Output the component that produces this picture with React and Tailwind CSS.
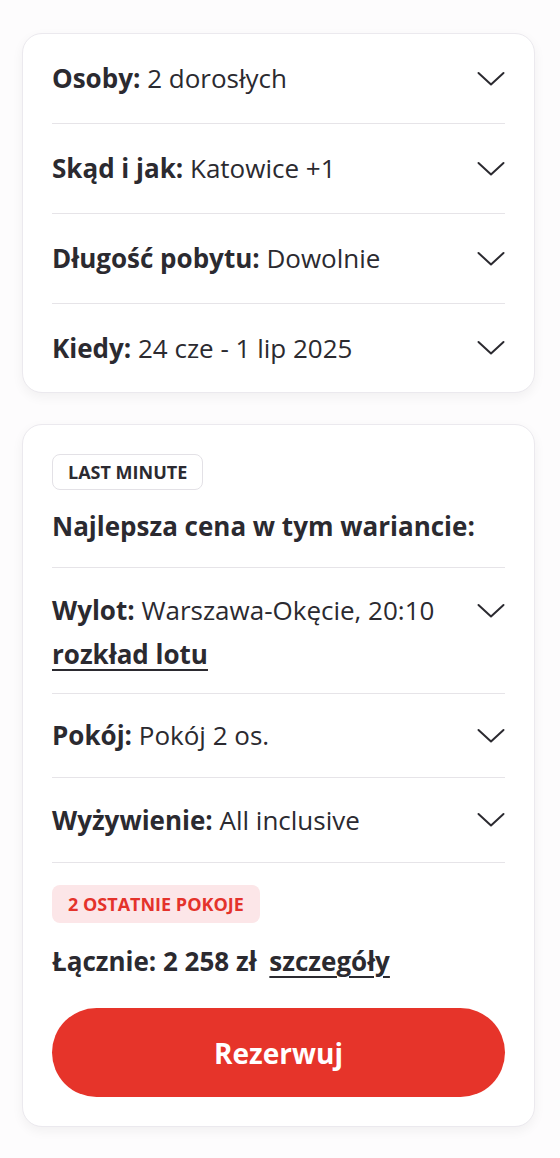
function Chevron({ className = '' }) {
  return (
    <svg width="28" height="16" viewBox="0 0 28 16" fill="none" className={`shrink-0 ${className}`}>
      <path d="M1.5 2 L14 13.5 L26.5 2" stroke="#2b2a30" strokeWidth="2" strokeLinecap="round" strokeLinejoin="round" />
    </svg>
  )
}

function Row({ label, value, last }) {
  return (
    <div className={`flex items-center justify-between ${last ? 'h-[88px]' : 'h-[90px] border-b border-[#e6e4e8]'}`}>
      <p className="text-[26px] text-[#2b2a30]">
        <span className="font-bold">{label}</span> {value}
      </p>
      <Chevron />
    </div>
  )
}

export default function App() {
  return (
    <div
      className="min-h-[1158px] bg-[#fdfcfd] pl-[22px] pr-[25px] pt-[33px] pb-[30px] flex flex-col gap-[31px]"
      style={{ fontFamily: '"Open Sans", Lato, sans-serif' }}
    >
      <div className="bg-white rounded-[20px] border border-[#ebe9ee] shadow-[0_4px_12px_rgba(0,0,0,0.05)] px-[29px]">
        <Row label="Osoby:" value="2 dorosłych" />
        <Row label="Skąd i jak:" value="Katowice +1" />
        <Row label="Długość pobytu:" value="Dowolnie" />
        <Row label="Kiedy:" value="24 cze - 1 lip 2025" last />
      </div>

      <div className="bg-white rounded-[20px] border border-[#ebe9ee] shadow-[0_4px_12px_rgba(0,0,0,0.05)] px-[29px] pt-[29px] pb-[29px]">
        <div className="w-fit h-[36px] flex items-center border border-[#e3e1e6] rounded-[8px] px-[15px] text-[18px] font-bold text-[#2b2a30]">
          LAST MINUTE
        </div>
        <p className="mt-[20px] pb-[25px] text-[26px] font-bold text-[#2b2a30] leading-[32px] border-b border-[#e6e4e8]">
          Najlepsza cena w tym wariancie:
        </p>

        <div className="flex items-start justify-between border-b border-[#e6e4e8] pt-[26px] pb-[21px]">
          <div>
            <p className="text-[26px] text-[#2b2a30] leading-[32px]">
              <span className="font-bold">Wylot:</span> Warszawa-Okęcie, 20:10
            </p>
            <a className="block mt-[10px] w-fit text-[26px] font-bold text-[#2b2a30] underline underline-offset-[5px] decoration-2 leading-[36px]">rozkład lotu</a>
          </div>
          <Chevron className="mt-[9px]" />
        </div>

        <div className="h-[84px] flex items-center justify-between border-b border-[#e6e4e8]">
          <p className="text-[26px] text-[#2b2a30]">
            <span className="font-bold">Pokój:</span> Pokój 2 os.
          </p>
          <Chevron />
        </div>

        <div className="h-[85px] flex items-center justify-between border-b border-[#e6e4e8]">
          <p className="text-[26px] text-[#2b2a30]">
            <span className="font-bold">Wyżywienie:</span> All inclusive
          </p>
          <Chevron />
        </div>

        <div className="mt-[22px] w-fit h-[38px] flex items-center bg-[#fce6e8] rounded-[8px] px-[16px] text-[18px] font-bold text-[#e4332b]">
          2 OSTATNIE POKOJE
        </div>

        <p className="mt-[22px] text-[26px] font-bold text-[#2b2a30] leading-[32px]">
          Łącznie: 2 258 zł{' '}
          <a className="ml-[6px] underline underline-offset-[5px] decoration-2">szczegóły</a>
        </p>

        <button className="mt-[31px] w-full h-[89px] rounded-full bg-[#e6342a] text-white text-[28px] font-bold">
          Rezerwuj
        </button>
      </div>
    </div>
  )
}
